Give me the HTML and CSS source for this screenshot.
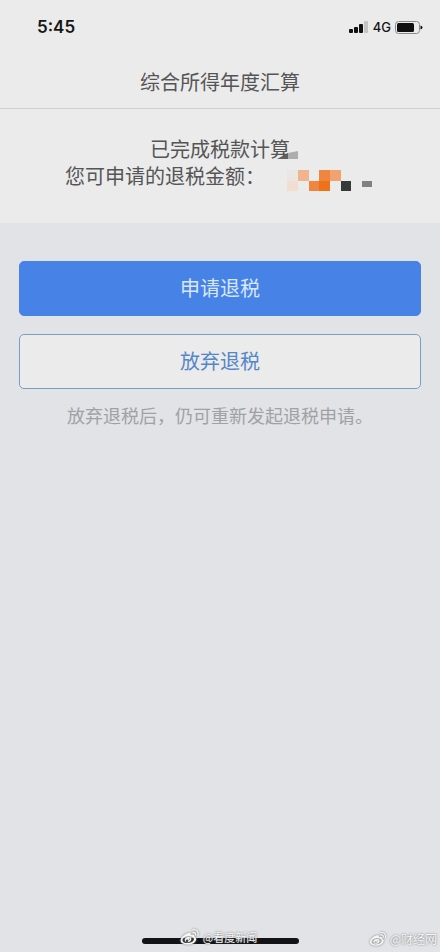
FILE: index.html
```html
<!DOCTYPE html>
<html lang="zh-CN">
<head>
<meta charset="utf-8">
<meta name="viewport" content="width=device-width, initial-scale=1">
<title>综合所得年度汇算</title>
<link rel="stylesheet" href="styles.css">
</head>
<body>
<svg class="defs" aria-hidden="true">
  <symbol id="weibo" viewBox="0 0 20 18">
    <path fill-rule="evenodd" d="M7.5 5.2C10 4 11.600 4.900 11 7C14 6.100 15.500 7.200 14.900 9C17 9.900 17 12 15.200 13.900C12.500 16.700 6.500 17.400 3 15.500C.2 14 .3 11.300 2.500 8.800C4 7.100 5.800 5.900 7.500 5.200ZM8.300 8.200C4.800 8.500 2.500 10.300 2.700 12.400C2.900 14.300 5.500 15.400 8.900 15C12.200 14.600 14.500 12.800 14.200 10.800C13.900 8.900 11.500 7.900 8.300 8.200Z"/>
    <path fill-rule="evenodd" d="M8.500 9.100C6 9.300 4.600 10.900 5 12.600C5.400 14.200 7.400 14.700 9.300 14C11.200 13.300 12.100 11.600 11.400 10.300C10.900 9.400 9.800 9 8.500 9.100ZM7.400 11.500A1.300 1.200 0 1 1 7.400 13.900A1.300 1.200 0 1 1 7.400 11.500ZM9.600 10.600A.6 .6 0 1 1 9.600 11.800A.6 .6 0 1 1 9.600 10.600Z"/>
    <path d="M13 1.800C16.800 1 19.400 4.200 18.200 7.800M13.400 4.500C15.200 4.100 16.300 5.400 15.800 7" fill="none" stroke="currentColor" stroke-width="1.300" stroke-linecap="round"/>
  </symbol>
</svg>
<div class="screen">
  <div class="status">
    <span class="time">5:45</span>
    <div class="indicators">
      <svg class="signal" viewBox="0 0 20 13" role="img" aria-label="信号">
        <rect x="0" y="8" width="4" height="4" rx="1"/>
        <rect x="5" y="6" width="4" height="6" rx="1"/>
        <rect x="10" y="3" width="4" height="9" rx="1"/>
        <rect class="weak" x="15" y="0" width="4" height="12" rx="1"/>
      </svg>
      <span class="network">4G</span>
      <svg class="battery" viewBox="0 0 28 13" role="img" aria-label="电池">
        <rect class="shell" x="0.500" y="0.500" width="24" height="12" rx="3"/>
        <rect x="2" y="2" width="17" height="9" rx="1.500"/>
        <path d="M25.500 4.500Q27.500 5 27.500 6.500T25.500 8.500Z"/>
      </svg>
    </div>
  </div>
  <header class="header"><h1>综合所得年度汇算</h1></header>
  <section class="summary">
    <p>已完成税款计算<svg class="smudge" viewBox="0 0 22 9" aria-hidden="true">
      <path fill="#606060" d="M0 8L11 2V8Z"/><path fill="#adadad" d="M11 2L21 0V8H11Z"/></svg></p>
    <p class="amount-line"><span>您可申请的退税金额：</span><svg class="amount" viewBox="0 0 86 22" role="img" aria-label="金额已遮挡">
      <path fill="#e9e6e4" d="M0 0H11V11H0Z"/>
      <path fill="#f2ddd2" d="M0 11H11V21H0Z"/>
      <path fill="#f0b58e" d="M11 0H22V11H11Z"/>
      <path fill="#ef8640" d="M32 0H43V11H32ZM22 11H32V21H22Z"/>
      <path fill="#f1a26e" d="M43 0H54V11H43Z"/>
      <path fill="#f07218" d="M32 11H43V21H32Z"/>
      <path fill="#363a3a" d="M54 11H64V21H54Z"/>
      <path fill="#808182" d="M75 11H85V17H75Z"/></svg></p>
  </section>
  <main class="actions">
    <button class="btn primary" type="button">申请退税</button>
    <button class="btn outline" type="button">放弃退税</button>
    <p class="note">放弃退税后，仍可重新发起退税申请。</p>
  </main>
  <footer class="footer">
    <div class="home"></div>
    <div class="mark mark-center"><svg viewBox="0 0 20 18" aria-hidden="true"><use href="#weibo"/></svg><span>@看度新闻</span></div>
    <div class="mark mark-right"><svg viewBox="0 0 20 18" aria-hidden="true"><use href="#weibo"/></svg><span>@财经网</span></div>
  </footer>
</div>
</body>
</html>
```
FILE: styles.css
```css
* { box-sizing: border-box; }
body {
  margin: 0;
  background: #e1e3e6;
  color: #555;
  font-family: "Noto Sans CJK SC", sans-serif;
  font-weight: 400;
}
h1, p { margin: 0; font-weight: inherit; }
.defs { position: absolute; width: 0; height: 0; }
.screen { display: flex; flex-direction: column; min-height: 100vh; }
.status {
  display: flex;
  justify-content: space-between;
  align-items: center;
  height: 56px;
  padding: 0 17px 2px 37px;
  background: #ebebeb;
  color: #151515;
  font-family: Inter, sans-serif;
}
.time { font-size: 17px; font-weight: 600; }
.indicators { display: flex; align-items: center; gap: 4px; }
.signal { width: 20px; height: 13px; fill: #111; }
.signal .weak { fill: #c4c4c4; }
.network { font-size: 13px; font-weight: 500; }
.battery { width: 28px; height: 13px; fill: #111; }
.battery .shell { fill: none; stroke: #8b8b8b; }
.header {
  height: 53px;
  background: #ebebeb;
  border-bottom: 1px solid #cfcfd0;
  text-align: center;
}
.header h1 { font-size: 20px; line-height: 52px; }
.summary {
  padding: 26px 0 34px;
  background: #ebebeb;
  font-size: 20px;
  line-height: 27px;
  text-align: center;
}
.smudge { position: absolute; width: 22px; height: 9px; margin: 16px 0 0 -13px; }
.amount-line { display: flex; justify-content: center; align-items: center; height: 27px; }
.amount { width: 86px; height: 22px; margin: 10px 2px 0 22px; flex: none; }
.actions { flex: 1; display: flex; flex-direction: column; gap: 18px; padding: 38px 19px 0; }
.btn {
  height: 55px;
  padding: 0 0 3px;
  border: 1px solid #4782e6;
  border-radius: 5px;
  font: inherit;
  font-size: 20px;
}
.primary { background: #4782e6; color: #d8e7fa; }
.outline { background: #ebebeb; border-color: #779fc3; color: #5486c9; }
.note { margin-top: -5px; color: #a0a1a5; font-size: 18px; line-height: 26px; text-align: center; }
.footer { position: relative; height: 24px; padding-top: 10px; }
.home { width: 157px; height: 6px; margin: 0 auto; border-radius: 3px; background: #111316; }
.mark {
  position: absolute;
  display: flex;
  align-items: center;
  gap: 3px;
  color: #f5f5f5;
  fill: #f5f5f5;
  font-size: 11px;
  line-height: 16px;
  text-shadow: 0 0 2px #666;
}
.mark svg { width: 20px; height: 18px; filter: drop-shadow(0 0 1px #777); }
.mark-center { left: 50%; top: 0; transform: translateX(-52%); }
.mark-right { right: 3px; top: 3px; font-size: 12px; }
.mark-right svg { width: 18px; height: 16px; }
```
